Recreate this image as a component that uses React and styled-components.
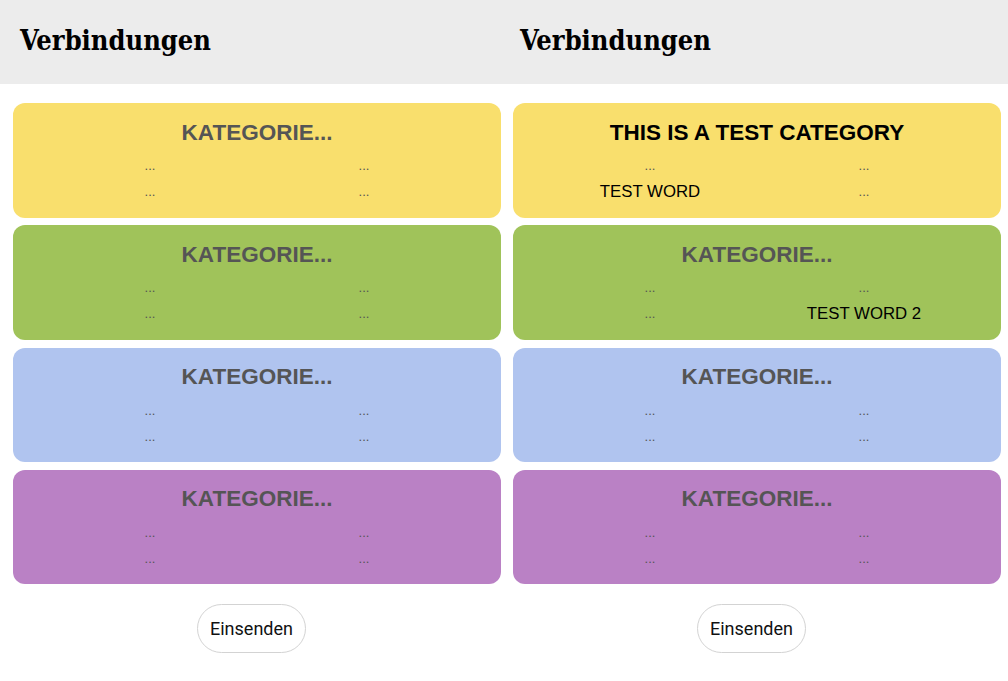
import React from "react";
import styled, { createGlobalStyle } from "styled-components";

const GlobalStyle = createGlobalStyle`
  html, body { margin: 0; padding: 0; background: #ffffff; }
  body { font-family: "Liberation Sans", Arial, sans-serif; }
`;

const Page = styled.div`
  display: flex;
  width: 1008px;
`;

const Panel = styled.div`
  width: 500px;
  display: flex;
  flex-direction: column;
`;

const Header = styled.header`
  height: 84px;
  background: #ececec;
  display: flex;
  align-items: center;
  padding-left: 20px;
  box-sizing: border-box;
  width: ${(p) => (p.$last ? "508px" : "500px")};
`;

const Title = styled.h1`
  margin: 0;
  font-family: "DejaVu Serif Condensed", "DejaVu Serif", "Liberation Serif", serif;
  font-stretch: condensed;
  font-weight: bold;
  font-size: 27px;
  color: #000;
  padding-bottom: 3px;
`;

const Cards = styled.div`
  display: flex;
  flex-direction: column;
  gap: 7.83px;
  padding: 19px 0 0 13px;
`;

const Card = styled.div`
  width: 488px;
  height: 114.5px;
  box-sizing: border-box;
  border-radius: 12px;
  background: ${(p) => p.$color};
  display: flex;
  flex-direction: column;
  align-items: center;
  padding-top: 16.5px;
`;

const CatTitle = styled.div`
  font-family: "Liberation Sans", Arial, sans-serif;
  font-weight: bold;
  font-size: 22.5px;
  line-height: 26px;
  color: ${(p) => (p.$filled ? "#000" : "#555555")};
`;

const Words = styled.div`
  display: grid;
  grid-template-columns: 214px 214px;
  grid-auto-rows: 26px;
  margin-top: 7.5px;
`;

const Word = styled.div`
  text-align: center;
  font-family: "Liberation Sans", Arial, sans-serif;
  font-size: ${(p) => (p.$filled ? "16.8px" : "13px")};
  line-height: 26px;
  color: ${(p) => (p.$filled ? "#000" : "#555555")};
`;

const Footer = styled.div`
  display: flex;
  justify-content: center;
  padding: 19.5px 0 0 3px;
`;

const Button = styled.button`
  width: 109px;
  height: 49px;
  border-radius: 25px;
  border: 1px solid #d3d3d3;
  background: #fff;
  font-family: Roboto, "Liberation Sans", sans-serif;
  font-size: 18px;
  color: #111;
  padding: 0;
  cursor: pointer;
`;

const colors = ["#f9df6d", "#a0c35a", "#b0c4ef", "#ba81c5"];

const boards = [
  [
    { title: null, words: [null, null, null, null] },
    { title: null, words: [null, null, null, null] },
    { title: null, words: [null, null, null, null] },
    { title: null, words: [null, null, null, null] },
  ],
  [
    { title: "THIS IS A TEST CATEGORY", words: [null, null, "TEST WORD", null] },
    { title: null, words: [null, null, null, "TEST WORD 2"] },
    { title: null, words: [null, null, null, null] },
    { title: null, words: [null, null, null, null] },
  ],
];

export default function App() {
  return (
    <>
      <GlobalStyle />
      <Page>
        {boards.map((board, bi) => (
          <Panel key={bi}>
            <Header $last={bi === 1}>
              <Title>Verbindungen</Title>
            </Header>
            <Cards>
              {board.map((cat, ci) => (
                <Card key={ci} $color={colors[ci]}>
                  <CatTitle $filled={!!cat.title}>{cat.title || "KATEGORIE..."}</CatTitle>
                  <Words>
                    {cat.words.map((w, wi) => (
                      <Word key={wi} $filled={!!w}>
                        {w || "..."}
                      </Word>
                    ))}
                  </Words>
                </Card>
              ))}
            </Cards>
            <Footer>
              <Button>Einsenden</Button>
            </Footer>
          </Panel>
        ))}
      </Page>
    </>
  );
}
